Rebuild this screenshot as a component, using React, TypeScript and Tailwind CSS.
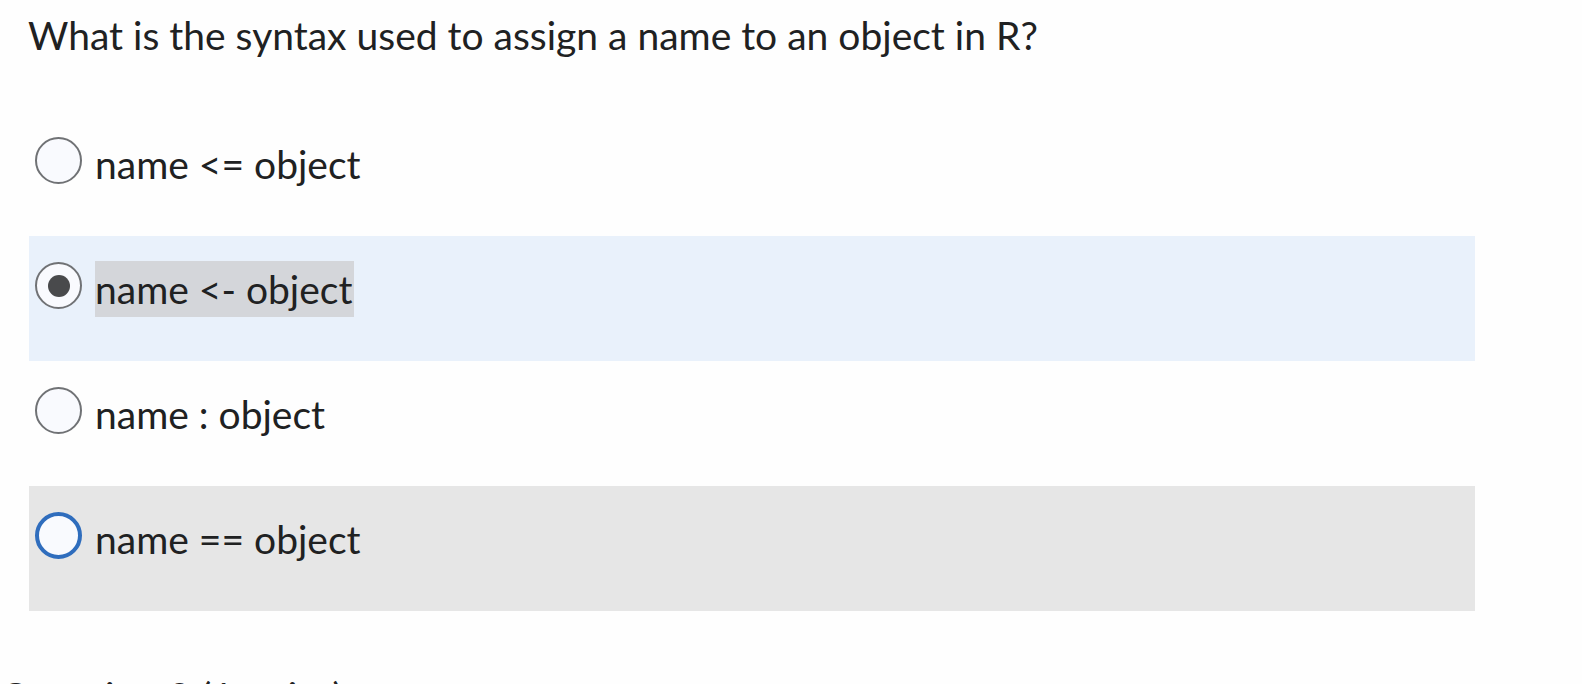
import { useState } from 'react'

const options = [
  { id: 'a', label: 'name <= object' },
  { id: 'b', label: 'name <- object' },
  { id: 'c', label: 'name : object' },
  { id: 'd', label: 'name == object' },
]

function Radio({ checked, focused }: { checked: boolean; focused: boolean }) {
  return (
    <span
      className={`flex h-[47px] w-[47px] shrink-0 items-center justify-center rounded-full bg-[#f9fafe] ${
        focused ? 'border-[4px] border-[#2f6dbd]' : 'border-2 border-[#707275]'
      }`}
    >
      {checked && <span className="h-[22px] w-[22px] rounded-full bg-[#494a4c]" />}
    </span>
  )
}

export default function App() {
  const [selected, setSelected] = useState('b')
  const hovered = 'd'

  return (
    <div className="h-[684px] overflow-hidden bg-[#fefefe] font-['Lato',sans-serif] text-[#202122]">
      <div className="pl-[28px] pt-[6px]">
        <h1 className="text-[39px] leading-[58px] font-normal">
          What is the syntax used to assign a name to an object in R?
        </h1>
      </div>

      {/* Answer choices */}
      <div className="mt-[47px] ml-[29px] w-[1446px]">
        {options.map(o => {
          const isSel = selected === o.id
          const isHover = hovered === o.id
          return (
            <label
              key={o.id}
              onClick={() => setSelected(o.id)}
              className={`flex h-[125px] cursor-pointer items-start gap-[13px] pl-[6px] pt-[25px] ${
                isSel ? 'bg-[#e9f1fb]' : isHover ? 'bg-[#e6e6e6]' : 'bg-transparent'
              }`}
            >
              <span className="mt-[1px]">
                <Radio checked={isSel} focused={isHover} />
              </span>
              <span
                className={`text-[39px] leading-[56px] ${isSel ? 'bg-[#d4d6da] pr-[2px]' : ''}`}
              >
                {o.label}
              </span>
            </label>
          )
        })}
      </div>

      <div className="mt-[57px] pl-0 text-[39px] leading-[56px]">Question 2 (1 point)</div>
    </div>
  )
}
